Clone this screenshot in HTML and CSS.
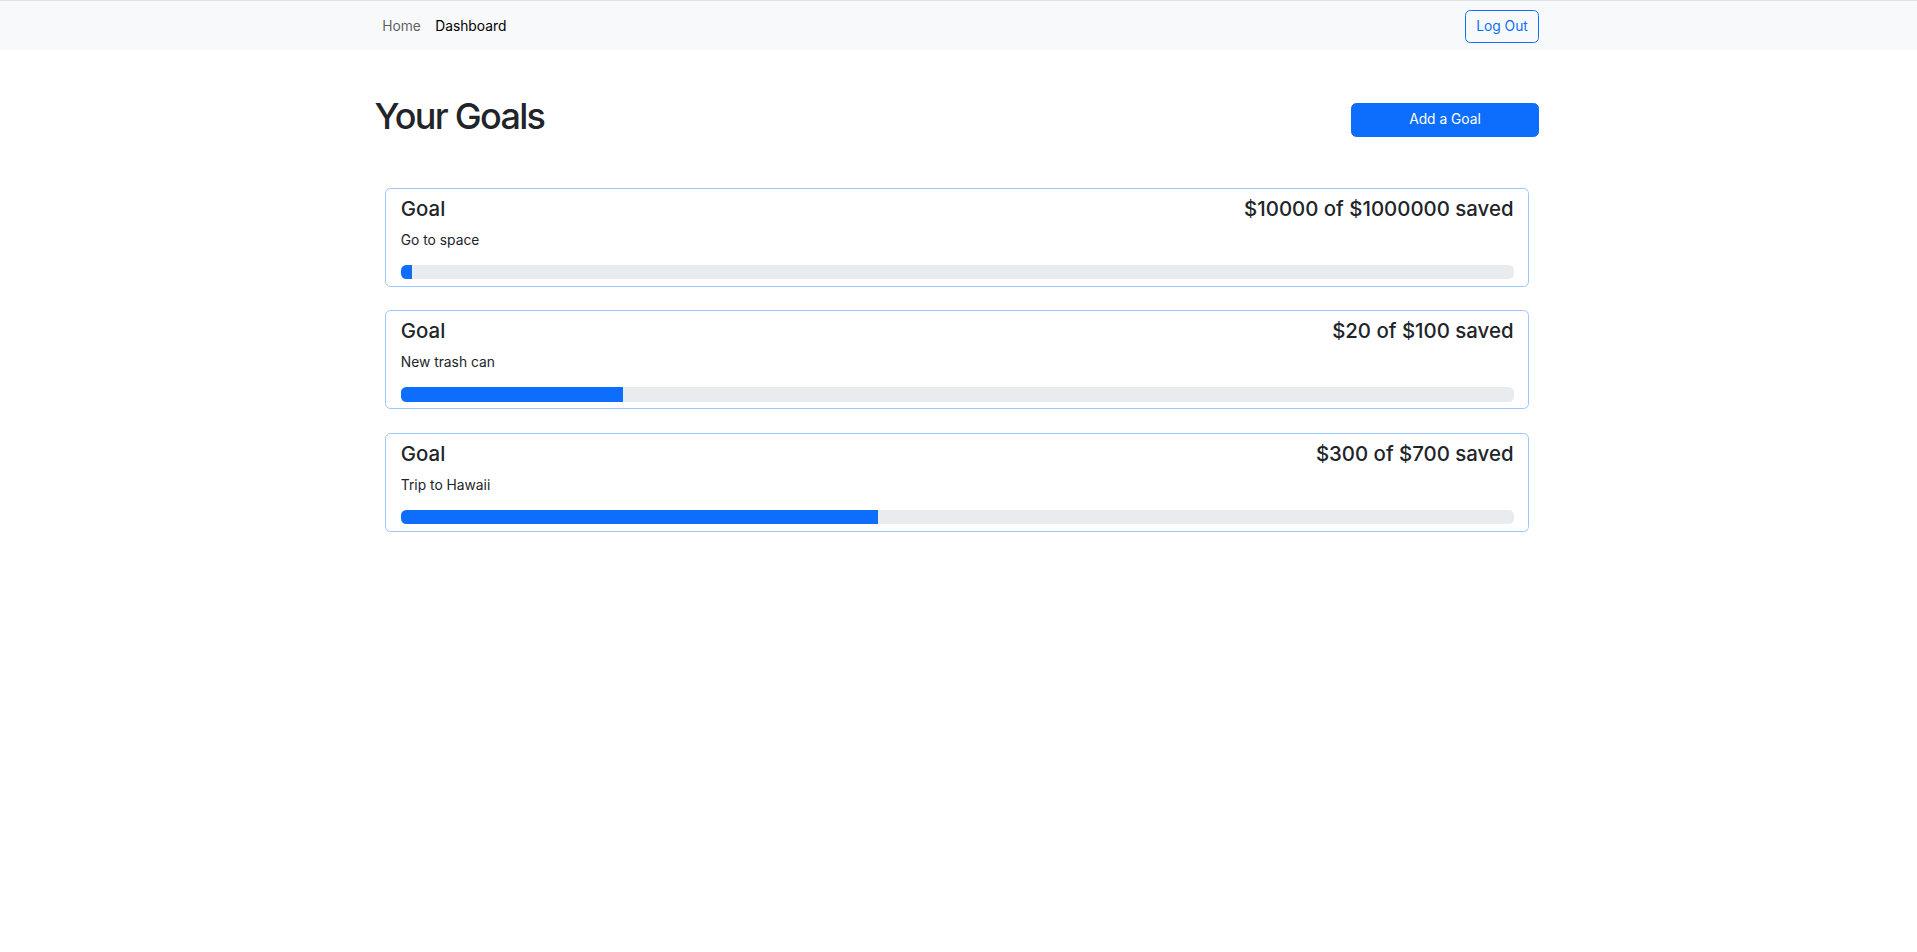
FILE: index.html
```html
<!DOCTYPE html>
<html lang="en">
<head>
<meta charset="utf-8">
<title>Your Goals</title>
<link rel="stylesheet" href="styles.css">
</head>
<body>
<nav class="navbar">
  <div class="container nav-inner">
    <div class="nav-links">
      <a class="nav-link" href="#">Home</a>
      <a class="nav-link active" href="#">Dashboard</a>
    </div>
    <button class="btn btn-outline">Log Out</button>
  </div>
</nav>
<main class="container">
  <div class="page-head">
    <h1 class="title">Your Goals</h1>
    <button class="btn btn-primary add-btn">Add a Goal</button>
  </div>
  <div class="goals">
    <div class="goal-card">
      <div class="goal-top">
        <h5 class="goal-label">Goal</h5>
        <h5 class="goal-amount">$10000 of $1000000 saved</h5>
      </div>
      <p class="goal-desc">Go to space</p>
      <div class="progress"><div class="progress-bar" style="width:1%"></div></div>
    </div>
    <div class="goal-card">
      <div class="goal-top">
        <h5 class="goal-label">Goal</h5>
        <h5 class="goal-amount">$20 of $100 saved</h5>
      </div>
      <p class="goal-desc">New trash can</p>
      <div class="progress"><div class="progress-bar" style="width:20%"></div></div>
    </div>
    <div class="goal-card">
      <div class="goal-top">
        <h5 class="goal-label">Goal</h5>
        <h5 class="goal-amount">$300 of $700 saved</h5>
      </div>
      <p class="goal-desc">Trip to Hawaii</p>
      <div class="progress"><div class="progress-bar" style="width:42.857%"></div></div>
    </div>
  </div>
</main>
</body>
</html>
```
FILE: styles.css
```css
* { box-sizing: border-box; }
html, body { margin: 0; padding: 0; }
body {
  font-family: Inter, "Noto Sans", "Liberation Sans", sans-serif;
  font-size: 13.8px;
  line-height: 1.5;
  color: #212529;
  background: #fff;
}
.container {
  width: 1164.5px;
  margin-left: calc(50% - 584px);
}
.navbar {
  background: #f8f9fa;
  border-top: 1px solid #dee2e6;
  height: 50px;
}
.nav-inner {
  display: flex;
  align-items: center;
  justify-content: space-between;
  height: 49px;
}
.nav-links { display: flex; padding-left: 0.5px; padding-top: 2px; }
.nav-link {
  padding: 0 7.2px;
  color: rgba(0,0,0,0.65);
  text-decoration: none;
  line-height: 21.6px;
  font-size: 13.8px;
}
.nav-link.active { color: rgba(0,0,0,1); }
.btn {
  font-family: inherit;
  font-size: 13.8px;
  line-height: 21.6px;
  border-radius: 5.4px;
  cursor: pointer;
}
.btn-outline {
  background: transparent;
  color: #0d6efd;
  border: 1px solid #0d6efd;
  padding: 5px 0;
  width: 74px;
  height: 33px;
  margin-top: 1px;
}
.btn-primary {
  background: #0d6efd;
  color: #fff;
  border: 1px solid #0d6efd;
}
.page-head {
  display: flex;
  justify-content: space-between;
  align-items: flex-start;
  padding-top: 45px;
}
.title {
  margin: 0;
  font-size: 36px;
  font-weight: 500;
  line-height: 43.2px;
  letter-spacing: -1.7px;
}
.add-btn {
  width: 188px;
  height: 34px;
  padding: 5.4px 10.8px;
  margin-top: 8px;
}
.goals {
  display: flex;
  flex-direction: column;
  gap: 23.5px;
  padding: 0 10.5px;
  margin-top: 49.5px;
}
.goal-card {
  border: 1px solid #9ec5fe;
  border-radius: 5.4px;
  padding: 8.1px 14px 6.1px 14.8px;
  height: 99px;
}
.goal-top {
  display: flex;
  justify-content: space-between;
  align-items: baseline;
  margin-bottom: 8.9px;
}
.goal-label, .goal-amount {
  margin: 0;
  font-size: 20.4px;
  font-weight: 500;
  line-height: 24px;
}
.goal-desc {
  margin: 0 0 13.6px;
  line-height: 21.6px;
  font-size: 13.8px;
}
.progress {
  height: 14.4px;
  background: #e9ecef;
  border-radius: 5.4px;
  overflow: hidden;
  display: flex;
}
.progress-bar {
  background: #0d6efd;
  height: 100%;
}
```
